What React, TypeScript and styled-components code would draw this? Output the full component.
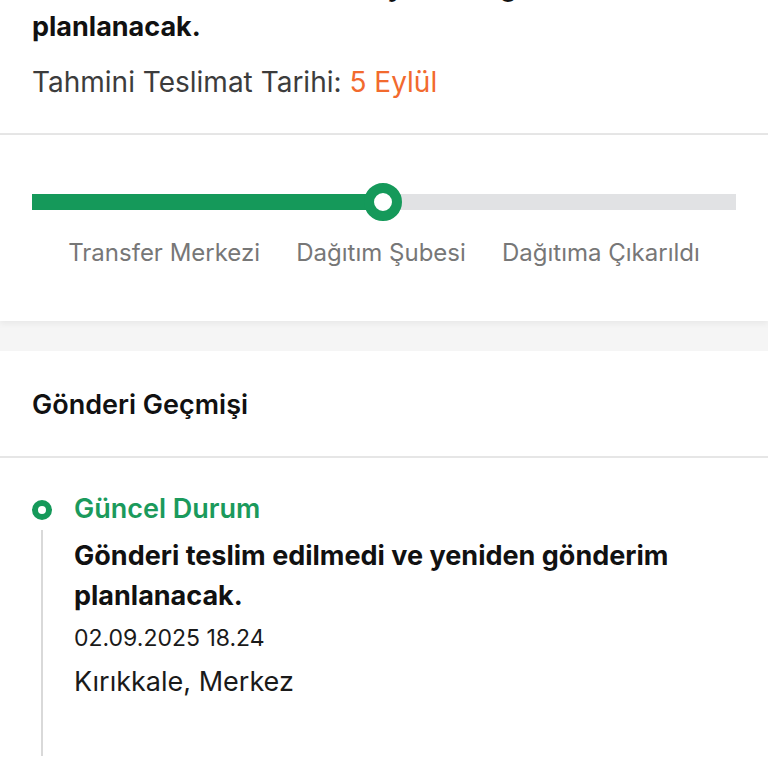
import React from 'react';
import styled, { createGlobalStyle } from 'styled-components';

const GlobalStyle = createGlobalStyle`
  html, body {
    margin: 0;
    padding: 0;
    background: #f5f5f5;
    overflow: hidden;
  }
  * {
    box-sizing: border-box;
  }
`;

const Page = styled.div`
  width: 768px;
  height: 768px;
  overflow: hidden;
  background: #f5f5f5;
  font-family: Inter, "Liberation Sans", sans-serif;
`;

const SummaryCard = styled.section`
  background: #fff;
  padding: 0 32px 33px;
  border-bottom: 2px solid #e6e6e6;
`;

const StatusText = styled.h2`
  margin: -33px 0 0;
  font-size: 27px;
  line-height: 40px;
  font-weight: 700;
  color: #111;
`;

const EstimateRow = styled.p`
  margin: 17px 0 0;
  font-size: 28px;
  line-height: 36px;
  color: #3c3c3c;

  span {
    color: #f26a2e;
  }
`;

const ProgressCard = styled.section`
  background: #fff;
  padding: 48px 32px 53px;
  box-shadow: 0 3px 6px rgba(0, 0, 0, 0.05);
  position: relative;
`;

const Track = styled.div`
  position: relative;
  height: 38px;
  display: flex;
  align-items: center;
`;

const TrackBar = styled.div`
  width: 100%;
  height: 16px;
  background: #e1e2e4;
  overflow: hidden;
`;

const TrackFill = styled.div`
  height: 100%;
  background: #15995a;
`;

const Knob = styled.div`
  position: absolute;
  top: 0;
  width: 38px;
  height: 38px;
  margin-left: -19px;
  border-radius: 50%;
  border: 10px solid #15995a;
  background: #fff;
`;

const Steps = styled.div`
  margin-top: 17px;
  display: flex;
  justify-content: space-evenly;
`;

const StepLabel = styled.span`
  font-size: 24px;
  line-height: 30px;
  color: #777;
`;

const Spacer = styled.div`
  height: 30px;
  background: #f5f5f5;
`;

const HistoryCard = styled.section`
  background: #fff;
  min-height: 480px;
`;

const HistoryHeader = styled.div`
  height: 107px;
  padding: 2px 32px 0;
  display: flex;
  align-items: center;
  border-bottom: 2px solid #e6e6e6;
  font-size: 27px;
  font-weight: 600;
  color: #111;
`;

const HistoryList = styled.div`
  padding: 33px 32px 0;
`;

const HistoryItem = styled.div`
  display: grid;
  grid-template-columns: 20px 1fr;
  column-gap: 22px;
`;

const Marker = styled.div`
  display: flex;
  flex-direction: column;
  align-items: center;
  padding-top: 9px;
`;

const Dot = styled.div<{ $active?: boolean }>`
  width: 20px;
  height: 20px;
  border-radius: 50%;
  border: 6px solid ${(p) => (p.$active ? '#15995a' : '#c9c9c9')};
  background: #fff;
`;

const Line = styled.div`
  flex: 1;
  width: 2px;
  margin-top: 10px;
  background: #d9d9d9;
`;

const Content = styled.div`
  padding-bottom: 56px;
`;

const ItemTitle = styled.div<{ $active?: boolean }>`
  font-size: 27px;
  line-height: 36px;
  font-weight: 600;
  color: ${(p) => (p.$active ? '#1b9a5c' : '#111')};
`;

const ItemText = styled.div`
  margin-top: 9px;
  font-size: 27px;
  line-height: 40px;
  font-weight: 700;
  color: #111;
`;

const ItemDate = styled.div`
  margin-top: 6px;
  font-size: 23px;
  line-height: 32px;
  color: #1a1a1a;
`;

const ItemPlace = styled.div`
  margin-top: 10px;
  font-size: 27px;
  line-height: 36px;
  color: #1a1a1a;
`;

const steps = ['Transfer Merkezi', 'Dağıtım Şubesi', 'Dağıtıma Çıkarıldı'];
const progress = 49.9;

const App = () => {
  return (
    <Page>
      <GlobalStyle />
      <SummaryCard>
        <StatusText>
          Gönderi teslim edilmedi ve yeniden gönderim planlanacak.
        </StatusText>
        <EstimateRow>
          Tahmini Teslimat Tarihi: <span>5 Eylül</span>
        </EstimateRow>
      </SummaryCard>
      <ProgressCard>
        <Track>
          <TrackBar>
            <TrackFill style={{ width: `${progress}%` }} />
          </TrackBar>
          <Knob style={{ left: `${progress}%` }} />
        </Track>
        <Steps>
          {steps.map((s) => (
            <StepLabel key={s}>{s}</StepLabel>
          ))}
        </Steps>
      </ProgressCard>
      <Spacer />
      <HistoryCard>
        <HistoryHeader>Gönderi Geçmişi</HistoryHeader>
        <HistoryList>
          <HistoryItem>
            <Marker>
              <Dot $active />
              <Line />
            </Marker>
            <Content>
              <ItemTitle $active>Güncel Durum</ItemTitle>
              <ItemText>
                Gönderi teslim edilmedi ve yeniden gönderim planlanacak.
              </ItemText>
              <ItemDate>02.09.2025 18.24</ItemDate>
              <ItemPlace>Kırıkkale, Merkez</ItemPlace>
            </Content>
          </HistoryItem>
        </HistoryList>
      </HistoryCard>
    </Page>
  );
};

export default App;
